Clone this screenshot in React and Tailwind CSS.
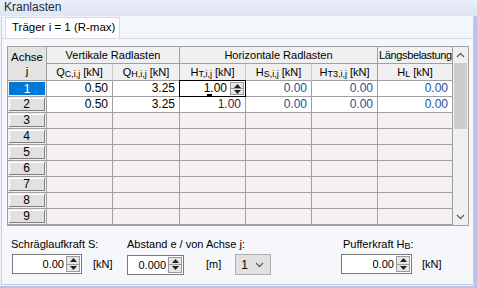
import React from "react";

const B = "border-[#a0a0a0]";

function Sub({ main, sub, unit }) {
  return (
    <span className="whitespace-nowrap">
      {main}
      <span className="text-[9px] relative top-[1px]">{sub}</span>
      {" "}
      {unit}
    </span>
  );
}

function Chevron({ up, className = "" }) {
  return (
    <svg width="9" height="6" viewBox="0 0 9 6" className={className}>
      <path
        d={up ? "M1 5 L4.5 1.5 L8 5" : "M1 1 L4.5 4.5 L8 1"}
        fill="none"
        stroke="#606060"
        strokeWidth="1.3"
      />
    </svg>
  );
}

function Spinner({ className = "" }) {
  return (
    <div className={"flex flex-col w-[14px] " + className}>
      <div className="flex-1 flex items-center justify-center bg-[#e6e6e6] border border-[#9a9a9a]">
        <svg width="7" height="4" viewBox="0 0 7 4">
          <path d="M0 4 L3.5 0 L7 4 Z" fill="#202020" />
        </svg>
      </div>
      <div className="flex-1 flex items-center justify-center bg-[#e6e6e6] border border-t-0 border-[#9a9a9a]">
        <svg width="7" height="4" viewBox="0 0 7 4">
          <path d="M0 0 L3.5 4 L7 0 Z" fill="#202020" />
        </svg>
      </div>
    </div>
  );
}

function NumInput({ value, width }) {
  return (
    <div
      className="h-[20px] border border-[#7a7a7a] bg-white flex items-stretch p-[1px]"
      style={{ width }}
    >
      <div className="flex-1 text-right pr-[2px] leading-[16px]">{value}</div>
      <Spinner />
    </div>
  );
}

const widths = [66, 67, 66, 66, 66, 75];

const data = [
  ["0.50", "3.25", "1.00", "0.00", "0.00", "0.00"],
  ["0.50", "3.25", "1.00", "0.00", "0.00", "0.00"],
];

export default function App() {
  return (
    <div className="w-[477px] h-[288px] overflow-hidden bg-[#eef2fa] font-['Liberation_Sans',Arial,sans-serif] text-[11px] text-black">
      {/* title */}
      <div className="h-[16px] bg-gradient-to-b from-[#e9eef7] to-[#dfe6f2] pl-[4px] leading-[15px] text-[12px] text-[#1c2a3a]">
        Kranlasten
      </div>
      <div className="flex h-[270px]">
        <div className="w-[474px] pl-[1px] pt-[1px] pb-[1px] flex">
          <div className="flex-1 border-l border-r border-b border-[#c9ced8] bg-[#f3f6fb] flex flex-col">
            {/* tab strip */}
            <div className="h-[21px] pl-[3px] flex items-end">
              <div className="h-[21px] w-[115px] bg-white border border-b-0 border-[#d6d9df] pl-[6px] leading-[19px] text-[11.5px]">
                Träger i = 1 (R-max)
              </div>
            </div>
            {/* tab page */}
            <div className="flex-1 border-t border-[#d6d9df] bg-[#f5f7fb] pl-[5px] pt-[7px]">
              {/* table */}
              <div className={"flex w-[462px] border " + B + " bg-[#f4f0f4]"}>
                <div className="flex flex-col">
                  {/* header */}
                  <div className="flex bg-[#f0f0f0]">
                    <div className={"w-[39px] h-[34px] bg-[#e3e3e3] border-r border-b " + B + " flex flex-col items-center justify-center leading-[14px] text-[11.5px]"}>
                      <span>Achse</span>
                      <span>j</span>
                    </div>
                    <div className="flex flex-col">
                      <div className="flex h-[17px] text-[11px]">
                        <div className={"w-[133px] border-r border-b " + B + " text-center leading-[16px]"}>
                          Vertikale Radlasten
                        </div>
                        <div className={"w-[198px] border-r border-b " + B + " text-center leading-[16px]"}>
                          Horizontale Radlasten
                        </div>
                        <div className={"w-[75px] border-r border-b " + B + " leading-[16px] whitespace-nowrap tracking-[-0.35px] pl-[1px]"}>
                          Längsbelastung
                        </div>
                      </div>
                      <div className="flex h-[17px] text-[11px]">
                        <div className={"w-[66px] border-r border-r-[#c8c8c8] border-b " + B + " text-center leading-[16px]"}>
                          <Sub main="Q" sub="C,i,j" unit="[kN]" />
                        </div>
                        <div className={"w-[67px] border-r border-b " + B + " text-center leading-[16px]"}>
                          <Sub main="Q" sub="H,i,j" unit="[kN]" />
                        </div>
                        <div className={"w-[66px] border-r border-r-[#c8c8c8] border-b " + B + " text-center leading-[16px]"}>
                          <Sub main="H" sub="T,i,j" unit="[kN]" />
                        </div>
                        <div className={"w-[66px] border-r border-r-[#c8c8c8] border-b " + B + " text-center leading-[16px]"}>
                          <Sub main="H" sub="S,i,j" unit="[kN]" />
                        </div>
                        <div className={"w-[66px] border-r border-b " + B + " text-center leading-[16px]"}>
                          <Sub main="H" sub="T3,i,j" unit="[kN]" />
                        </div>
                        <div className={"w-[75px] border-r border-b " + B + " text-center leading-[16px]"}>
                          <Sub main="H" sub="L" unit="[kN]" />
                        </div>
                      </div>
                    </div>
                  </div>
                  {/* rows */}
                  {[1, 2, 3, 4, 5, 6, 7, 8, 9].map((n, ri) => {
                    const row = data[ri];
                    const sel = n === 1;
                    return (
                      <div key={n} className="flex h-[16px]">
                        <div className={"w-[39px] border-r border-b " + B + " p-[1px] bg-[#f0f0f0]"}>
                          <div
                            className={
                              "h-full w-full flex items-center justify-center text-[12px] " +
                              (sel
                                ? "bg-[#0078d7] text-white"
                                : "bg-[#e1e1e1] border-r border-b border-[#808080] shadow-[inset_1px_1px_0_#ffffff]")
                            }
                          >
                            {n}
                          </div>
                        </div>
                        {widths.map((w, ci) => {
                          if (!row) {
                            return (
                              <div
                                key={ci}
                                className={"border-r border-b " + B}
                                style={{ width: w }}
                              />
                            );
                          }
                          if (ri === 0 && ci === 2) {
                            return (
                              <div
                                key={ci}
                                className={"border-r border-b " + B + " bg-white relative"}
                                style={{ width: w }}
                              >
                                <div className="absolute -left-[1px] -top-[1px] w-[67px] h-[17px] border border-black flex items-stretch bg-white">
                                  <div className="flex-1 text-right pr-[3px] leading-[14px] text-[12px] relative">
                                    1.00
                                    <span className="absolute right-[18px] bottom-[0px] w-[5px] h-[2px] bg-black" />
                                  </div>
                                  <Spinner className="w-[13px] my-[1px] mr-[1px]" />
                                </div>
                              </div>
                            );
                          }
                          const color =
                            ci >= 3
                              ? "text-[#1a4f9c]"
                              : ci === 2
                              ? "text-[#5a1038]"
                              : "text-black";
                          return (
                            <div
                              key={ci}
                              className={"border-r border-b " + B + " bg-white text-right pr-[4px] leading-[15px] text-[12px] " + color}
                              style={{ width: w }}
                            >
                              {row[ci]}
                            </div>
                          );
                        })}
                      </div>
                    );
                  })}
                </div>
                {/* scrollbar */}
                <div className="w-[16px] bg-[#f0f0f0] flex flex-col">
                  <div className="h-[16px] flex items-center justify-center">
                    <Chevron up />
                  </div>
                  <div className="h-[66px] mx-[1px] bg-[#cdcdcd]" />
                  <div className="flex-1" />
                  <div className="h-[16px] flex items-center justify-center">
                    <Chevron />
                  </div>
                </div>
              </div>
              {/* bottom controls */}
              <div className="flex mt-[12px] pl-[4px]">
                <div className="w-[116px] flex flex-col">
                  <div className="h-[13px] leading-[13px] pl-[0px]">Schräglaufkraft S:</div>
                  <div className="flex items-center mt-[3px] pl-[1px]">
                    <NumInput value="0.00" width={70} />
                    <span className="ml-[11px]">[kN]</span>
                  </div>
                </div>
                <div className="w-[214px] flex flex-col">
                  <div className="h-[13px] leading-[13px]">Abstand e / von Achse j:</div>
                  <div className="flex items-center mt-[3px]">
                    <NumInput value="0.000" width={57} />
                    <span className="ml-[22px]">[m]</span>
                    <div className="ml-[14px] w-[36px] h-[21px] bg-[#e1e1e1] border border-[#adadad] flex items-center pl-[5px] text-[12px]">
                      <span className="flex-1">1</span>
                      <Chevron className="mr-[6px]" />
                    </div>
                  </div>
                </div>
                <div className="flex flex-col">
                  <div className="h-[13px] leading-[13px] pl-[2px]">
                    Pufferkraft H<span className="text-[9px] relative top-[1px]">B</span>:
                  </div>
                  <div className="flex items-center mt-[3px]">
                    <NumInput value="0.00" width={71} />
                    <span className="ml-[10px]">[kN]</span>
                  </div>
                </div>
              </div>
            </div>
          </div>
        </div>
        <div className="w-[3px] bg-[#b9c2ea]" />
      </div>
      <div className="h-[2px] bg-[#b9c2ea]" />
    </div>
  );
}
